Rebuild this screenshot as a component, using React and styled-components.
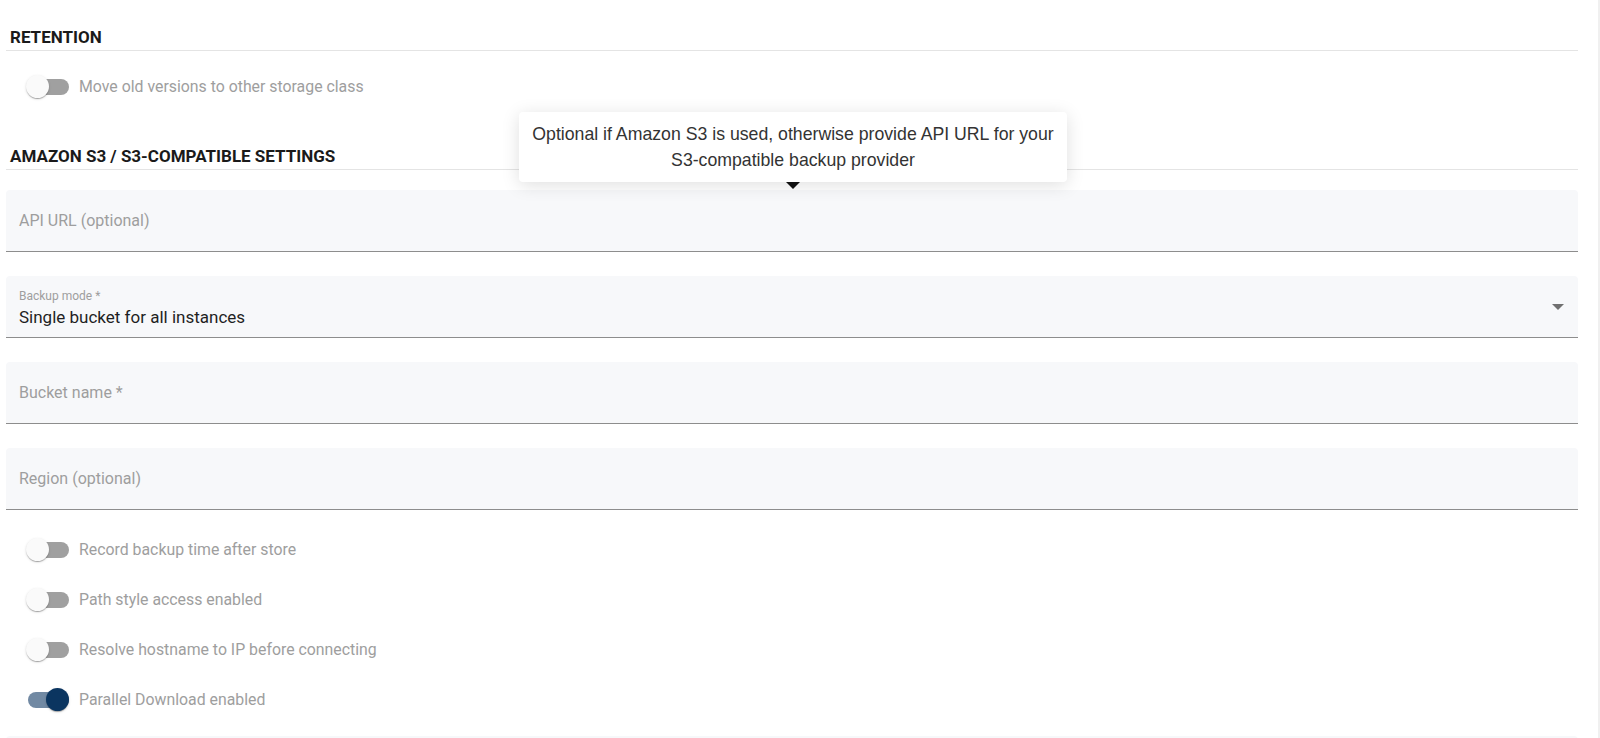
import React from "react";
import styled, { createGlobalStyle } from "styled-components";

const GlobalStyle = createGlobalStyle`
  html, body {
    margin: 0;
    padding: 0;
    background: #fff;
    font-family: Roboto, "Noto Sans", Arial, sans-serif;
  }
`;

const Page = styled.div`
  position: relative;
  width: 1600px;
  height: 738px;
  overflow: hidden;
  box-sizing: border-box;
  padding: 0 20px 0 6px;
  border-right: 2px solid #f0f0f0;
`;

const SectionTitle = styled.div`
  padding: ${p => p.$top}px 4px 3px;
  font-size: 17px;
  line-height: 20px;
  font-weight: 700;
  color: #1a1a1a;
  border-bottom: 1px solid #e4e4e4;
`;

const ToggleRow = styled.label`
  display: flex;
  align-items: center;
  height: 50px;
  margin-top: ${p => p.$top || 0}px;
  padding-left: 20px;
  gap: 9px;
  color: #9e9e9e;
  font-size: 15.85px;
`;

const Switch = styled.span`
  position: relative;
  display: inline-block;
  width: 44px;
  height: 23px;
  flex: none;
`;

const Track = styled.span`
  position: absolute;
  left: 2px;
  top: 4px;
  width: 41px;
  height: 16px;
  border-radius: 8px;
  background: ${p => (p.$on ? "#7189a3" : "#a0a0a0")};
`;

const Thumb = styled.span`
  position: absolute;
  top: 0;
  left: ${p => (p.$on ? "20px" : "0")};
  width: 23px;
  height: 23px;
  border-radius: 50%;
  background: ${p => (p.$on ? "#0b3560" : "#fafafa")};
  box-shadow: 0 2px 1px -1px rgba(0, 0, 0, 0.2), 0 1px 1px 0 rgba(0, 0, 0, 0.14),
    0 1px 3px 0 rgba(0, 0, 0, 0.12);
`;

const Fields = styled.div`
  display: flex;
  flex-direction: column;
  gap: 24px;
  margin-top: 20px;
`;

const Field = styled.div`
  position: relative;
  display: flex;
  align-items: center;
  justify-content: space-between;
  box-sizing: border-box;
  height: 62px;
  padding: 0 14px 0 13px;
  background: #f7f8fa;
  border-radius: 4px 4px 0 0;
  border-bottom: 1px solid #8d8d8d;
`;

const Placeholder = styled.span`
  font-size: 16px;
  color: #9e9e9e;
`;

const FilledBox = styled.div`
  display: flex;
  flex-direction: column;
  padding-top: 3px;
`;

const SmallLabel = styled.span`
  font-size: 12px;
  line-height: 14px;
  color: #9e9e9e;
`;

const Value = styled.span`
  margin-top: 4px;
  font-size: 17px;
  line-height: 20px;
  color: #1f1f1f;
`;

const Caret = styled.span`
  width: 0;
  height: 0;
  border-left: 6px solid transparent;
  border-right: 6px solid transparent;
  border-top: 6px solid #707070;
`;

const Toggles = styled.div`
  margin-top: 14px;
`;

const NextField = styled.div`
  margin-top: 12px;
  height: 20px;
  background: #f7f8fa;
  border-radius: 4px 4px 0 0;
`;

const Tooltip = styled.div`
  position: absolute;
  left: 519px;
  top: 112px;
  width: 548px;
  box-sizing: border-box;
  padding: 9px 8px;
  background: #fff;
  border-radius: 4px;
  box-shadow: 0 3px 18px rgba(0, 0, 0, 0.13);
  text-align: center;
  font-family: "Liberation Sans", Arial, sans-serif;
  font-size: 17.7px;
  line-height: 26px;
  color: #333;
  &::after {
    content: "";
    position: absolute;
    left: 50%;
    bottom: -7px;
    margin-left: -7px;
    border-left: 7px solid transparent;
    border-right: 7px solid transparent;
    border-top: 7px solid #111;
  }
`;

const Toggle = ({ on, label, top }) => (
  <ToggleRow $top={top}>
    <Switch>
      <Track $on={on} />
      <Thumb $on={on} />
    </Switch>
    {label}
  </ToggleRow>
);

const toggles = [
  { label: "Record backup time after store", on: false },
  { label: "Path style access enabled", on: false },
  { label: "Resolve hostname to IP before connecting", on: false },
  { label: "Parallel Download enabled", on: true },
];

export default function App() {
  return (
    <Page>
      <GlobalStyle />
      <SectionTitle $top={27}>RETENTION</SectionTitle>
      <Toggle label="Move old versions to other storage class" top={10} />

      <SectionTitle $top={35}>AMAZON S3 / S3-COMPATIBLE SETTINGS</SectionTitle>
      <Fields>
        <Field>
          <Placeholder>API URL (optional)</Placeholder>
        </Field>
        <Field>
          <FilledBox>
            <SmallLabel>Backup mode *</SmallLabel>
            <Value>Single bucket for all instances</Value>
          </FilledBox>
          <Caret />
        </Field>
        <Field>
          <Placeholder>Bucket name *</Placeholder>
        </Field>
        <Field>
          <Placeholder>Region (optional)</Placeholder>
        </Field>
      </Fields>

      <Toggles>
        {toggles.map((t, i) => (
          <Toggle key={`toggle-${i}`} on={t.on} label={t.label} />
        ))}
      </Toggles>
      <NextField />

      <Tooltip>
        Optional if Amazon S3 is used, otherwise provide API URL for your
        <br />
        S3-compatible backup provider
      </Tooltip>
    </Page>
  );
}
